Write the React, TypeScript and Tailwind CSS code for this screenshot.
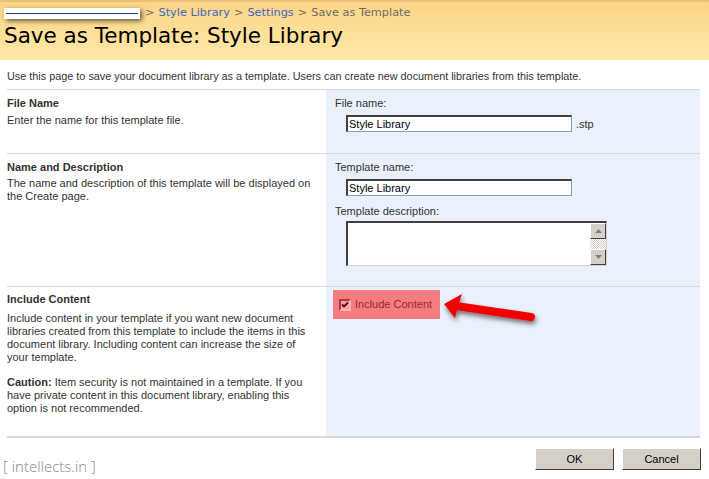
import React from "react";

const tah = { fontFamily: "'Liberation Sans', Tahoma, sans-serif" } as React.CSSProperties;

function Input({ value, w }: { value: string; w: string }) {
  return (
    <div className={`${w} h-[17px] bg-white border border-[#7f9db9] border-t-[#404040] border-l-[#404040] border-t-2 border-l-2 flex items-center pl-[1px] text-[11px] text-black leading-none`}>
      {value}
    </div>
  );
}

export default function App() {
  return (
    <div className="w-[709px] h-[479px] bg-white relative overflow-hidden text-[11px] text-[#333]" style={tah}>
      {/* header */}
      <div className="h-[60px] bg-gradient-to-b from-[#fcd586] to-[#fee8a8] border-t-2 border-[#e8c27a]">
        <div className="flex items-center h-[22px] pl-[4px] text-[11.3px]" style={{ fontFamily: "'DejaVu Sans', Verdana, sans-serif" }}>
          <div className="w-[136px] h-[11px] bg-white shadow-[2px_2px_5px_rgba(0,0,0,0.6)] flex items-center px-[2px]">
            <div className="w-full h-[1px] bg-[#1f3a7a]" />
          </div>
          <span className="ml-[5px] text-[#6b6b6b]">&gt;</span>
          <span className="ml-[4px] text-[#3b66c1]">Style Library</span>
          <span className="ml-[4px] text-[#6b6b6b]">&gt;</span>
          <span className="ml-[4px] text-[#3b66c1]">Settings</span>
          <span className="ml-[4px] text-[#6b6b6b]">&gt;</span>
          <span className="ml-[4px] text-[#6b6b6b]">Save as Template</span>
        </div>
        <div className="pl-[4px] text-[21.5px] leading-[24px] text-black" style={{ fontFamily: "'DejaVu Sans', Verdana, sans-serif" }}>
          Save as Template: Style Library
        </div>
      </div>

      {/* intro */}
      <div className="pl-[7px] pt-[8px] h-[29px] text-[10.85px] text-[#333]">
        Use this page to save your document library as a template. Users can create new document libraries from this template.
      </div>

      {/* form table */}
      <div className="mx-[7px] w-[693px]">
        {/* row 1 */}
        <div className="grid grid-cols-[319px_1fr] h-[64px] border-t border-[#d8d8d8]">
          <div className="pt-[5px]">
            <div className="font-bold text-[11px] text-[#333]">File Name</div>
            <div className="mt-[2px] leading-[13px]">Enter the name for this template file.</div>
          </div>
          <div className="bg-[#eaf1fc] pl-[9px] pt-[7px]">
            <div className="leading-[13px]">File name:</div>
            <div className="flex items-end mt-[5px] pl-[11px]">
              <Input value="Style Library" w="w-[226px]" />
              <span className="ml-[4px] text-[11px]">.stp</span>
            </div>
          </div>
        </div>
        {/* row 2 */}
        <div className="grid grid-cols-[319px_1fr] h-[133px] border-t border-[#d8d8d8]">
          <div className="pt-[5px]">
            <div className="font-bold text-[11px] text-[#333]">Name and Description</div>
            <div className="mt-[1px] leading-[13px]">
              The name and description of this template will be displayed on<br />the Create page.
            </div>
          </div>
          <div className="bg-[#eaf1fc] pl-[9px] pt-[7px]">
            <div className="leading-[13px]">Template name:</div>
            <div className="mt-[5px] pl-[11px]">
              <Input value="Style Library" w="w-[226px]" />
            </div>
            <div className="mt-[9px] leading-[13px]">Template description:</div>
            <div className="mt-[3px] ml-[11px] w-[261px] h-[45px] bg-white border-t-2 border-l-2 border-[#404040] border-r border-b border-r-[#d4d0c8] border-b-[#d4d0c8] flex justify-end">
              <div className="w-[16px] h-full flex flex-col bg-[repeating-conic-gradient(#d4d0c8_0%_25%,#ffffff_0%_50%)] bg-[length:2px_2px]">
                <div className="h-[16px] bg-[#d4d0c8] border border-t-white border-l-white border-r-[#404040] border-b-[#404040] flex items-center justify-center">
                  <svg width="7" height="4" viewBox="0 0 7 4"><path d="M3.5 0 L7 4 L0 4 Z" fill="#808080" /></svg>
                </div>
                <div className="flex-1" />
                <div className="h-[16px] bg-[#d4d0c8] border border-t-white border-l-white border-r-[#404040] border-b-[#404040] flex items-center justify-center">
                  <svg width="7" height="4" viewBox="0 0 7 4"><path d="M0 0 L7 0 L3.5 4 Z" fill="#808080" /></svg>
                </div>
              </div>
            </div>
          </div>
        </div>
        {/* row 3 */}
        <div className="grid grid-cols-[319px_1fr] h-[150px] border-t border-[#d8d8d8]">
          <div className="pt-[4px]">
            <div className="font-bold text-[11px] text-[#333]">Include Content</div>
            <div className="mt-[4px] leading-[13px]">
              Include content in your template if you want new document<br />
              libraries created from this template to include the items in this<br />
              document library. Including content can increase the size of<br />
              your template.
            </div>
            <div className="mt-[12px] leading-[13px]">
              <span className="font-bold">Caution:</span> Item security is not maintained in a template. If you<br />
              have private content in this document library, enabling this<br />
              option is not recommended.
            </div>
          </div>
          <div className="bg-[#eaf1fc] pl-[7px] pt-[3px]">
            <div className="w-[107px] h-[29px] bg-[#f67c80] flex items-center pl-[6px]">
              <div className="w-[12px] h-[12px] border-2 border-t-[#a83c40] border-l-[#a83c40] border-r-[#fbb4b6] border-b-[#fbb4b6] bg-[#f8a0a3] flex items-center justify-center">
                <svg width="8" height="8" viewBox="0 0 8 8"><path d="M1 3.5 L3 5.5 L7 1.5" stroke="#700000" strokeWidth="1.8" fill="none" /></svg>
              </div>
              <span className="ml-[4px] text-[11px] text-[#9a2a2e]">Include Content</span>
            </div>
          </div>
        </div>
        <div className="h-[2px] bg-[#d8d8d8]" />
      </div>

      {/* buttons */}
      <div className="flex justify-end gap-[8px] mr-[8px] mt-[10px]">
        {["OK", "Cancel"].map((b) => (
          <div key={b} className="w-[79px] h-[22px] bg-[#d4d0c8] border border-t-white border-l-white border-r-[#404040] border-b-[#404040] flex items-center justify-center text-[11px] text-black">
            {b}
          </div>
        ))}
      </div>

      {/* watermark */}
      <div className="absolute left-[3px] top-[459px] text-[15px] text-[#888] leading-none" style={{ fontFamily: "'Open Sans', 'Liberation Sans', sans-serif", fontWeight: 300 }}>
        [ intellects.in ]
      </div>

      {/* arrow */}
      <svg className="absolute left-[436px] top-[290px]" width="110" height="45" viewBox="0 0 110 45">
        <defs>
          <filter id="sh" x="-20%" y="-50%" width="140%" height="200%">
            <feDropShadow dx="1" dy="3" stdDeviation="2.5" floodColor="#000" floodOpacity="0.55" />
          </filter>
        </defs>
        <g filter="url(#sh)">
          <path d="M20 16 L95 27" stroke="#f20000" strokeWidth="8" strokeLinecap="round" fill="none" />
          <path d="M8 14 L26 4 L22 16 L19 28 Z" fill="#f20000" />
        </g>
      </svg>
    </div>
  );
}
